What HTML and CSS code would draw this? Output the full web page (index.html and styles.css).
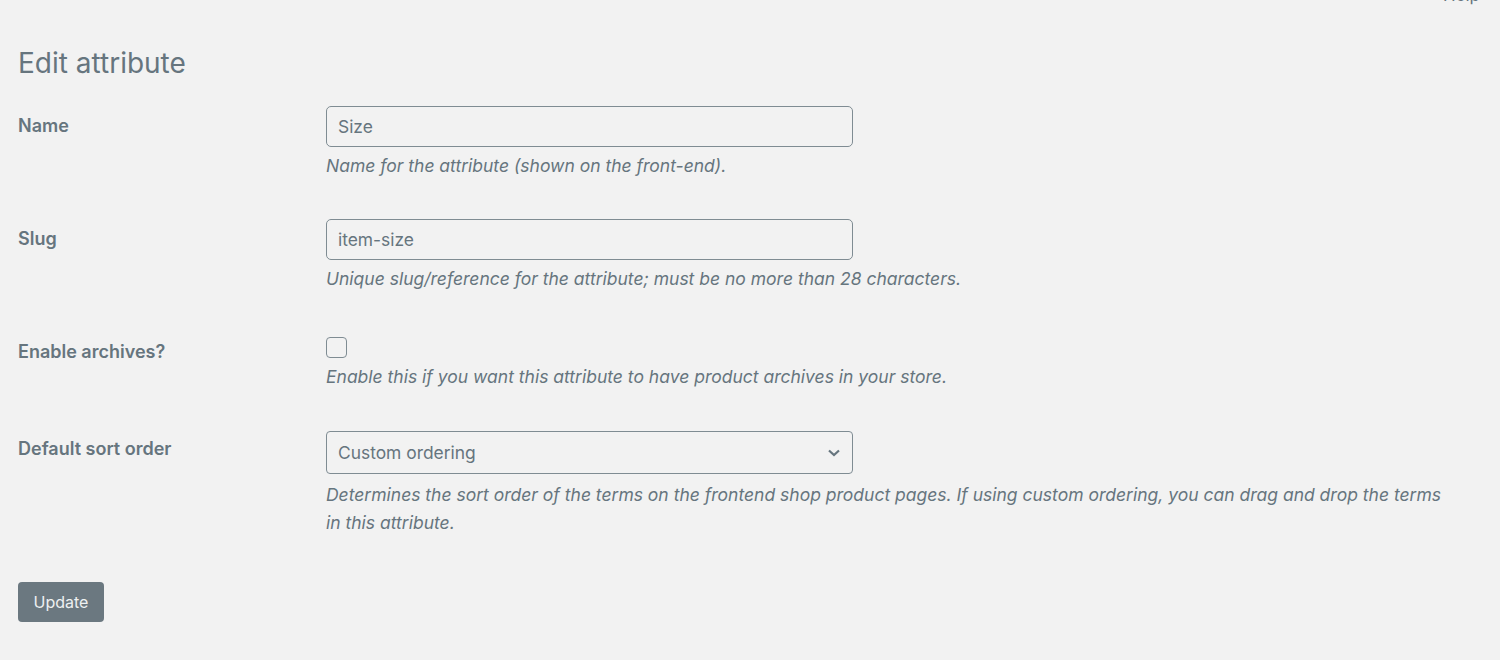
FILE: index.html
```html
<!DOCTYPE html>
<html lang="en">
<head>
<meta charset="utf-8">
<title>Edit attribute</title>
<link rel="stylesheet" href="styles.css">
</head>
<body>
<div class="topbar"><span class="help">Help</span></div>
<div class="wrap">
  <h1 class="title">Edit attribute</h1>
  <form class="form">
    <div class="row">
      <div class="label">Name</div>
      <div class="field">
        <input class="text-input" type="text" value="Size">
        <p class="description">Name for the attribute (shown on the front-end).</p>
      </div>
    </div>
    <div class="row">
      <div class="label">Slug</div>
      <div class="field">
        <input class="text-input" type="text" value="item-size">
        <p class="description">Unique slug/reference for the attribute; must be no more than 28 characters.</p>
      </div>
    </div>
    <div class="row">
      <div class="label">Enable archives?</div>
      <div class="field field-check">
        <span class="checkbox"></span>
        <p class="description">Enable this if you want this attribute to have product archives in your store.</p>
      </div>
    </div>
    <div class="row">
      <div class="label">Default sort order</div>
      <div class="field field-select">
        <div class="select">
          <span>Custom ordering</span>
          <svg class="chevron" width="14" height="10" viewBox="0 0 14 10"><path d="M2 2.5 L7 7 L12 2.5" fill="none" stroke="#66757e" stroke-width="2.2"/></svg>
        </div>
        <p class="description">Determines the sort order of the terms on the frontend shop product pages. If using custom ordering, you can drag and drop the terms in this attribute.</p>
      </div>
    </div>
    <div class="submit"><span class="button">Update</span></div>
  </form>
</div>
</body>
</html>
```

FILE: styles.css
```css
html, body {
  margin: 0;
  padding: 0;
  background: #f2f2f2;
}
body {
  font-family: Inter, "Liberation Sans", sans-serif;
  color: #66757e;
  height: 660px;
  overflow: hidden;
}
.topbar {
  height: 0;
  display: flex;
  justify-content: flex-end;
  padding-right: 20px;
}
.help {
  margin-top: -13px;
  font-size: 17px;
  line-height: 17px;
  color: #66757e;
}
.wrap {
  padding: 0 18px;
}
.title {
  margin: 0;
  padding-top: 44px;
  font-size: 28px;
  line-height: 38px;
  font-weight: 400;
  height: 43px;
  color: #66757e;
}
.form {
  margin: 0;
}
.row {
  display: flex;
}
.label {
  width: 308px;
  flex: none;
  padding-top: 25px;
  line-height: 28px;
  font-size: 18px;
  font-weight: 600;
}
.field {
  flex: 1;
  padding: 19px 0 20px;
}
.field-check {
  padding-top: 24px;
  padding-bottom: 19px;
}
.field-select {
  padding-top: 21px;
  padding-bottom: 19px;
}
.text-input {
  display: block;
  box-sizing: border-box;
  width: 527px;
  height: 41px;
  margin: 0;
  padding: 0 11px;
  border: 1px solid #7f8c93;
  border-radius: 5px;
  background: #f2f2f2;
  font-family: Inter, "Liberation Sans", sans-serif;
  font-size: 17.4px;
  color: #66757e;
  outline: none;
}
.description {
  margin: 5px 0 0;
  font-size: 17.5px;
  line-height: 28px;
  font-style: italic;
  max-width: 1120px;
}
.checkbox {
  display: block;
  box-sizing: border-box;
  width: 21px;
  height: 21px;
  border: 1px solid #7f8c93;
  border-radius: 4px;
}
.select {
  box-sizing: border-box;
  width: 527px;
  height: 43px;
  border: 1px solid #7f8c93;
  border-radius: 4px;
  padding: 0 11px;
  display: flex;
  align-items: center;
  justify-content: space-between;
  font-size: 17.4px;
}
.field-select .description {
  margin-top: 7px;
}
.submit {
  padding-top: 26px;
}
.button {
  display: inline-flex;
  align-items: center;
  justify-content: center;
  box-sizing: border-box;
  width: 86px;
  height: 40px;
  border-radius: 4px;
  background: #6b7880;
  color: #eef0f1;
  font-size: 16px;
}
```
